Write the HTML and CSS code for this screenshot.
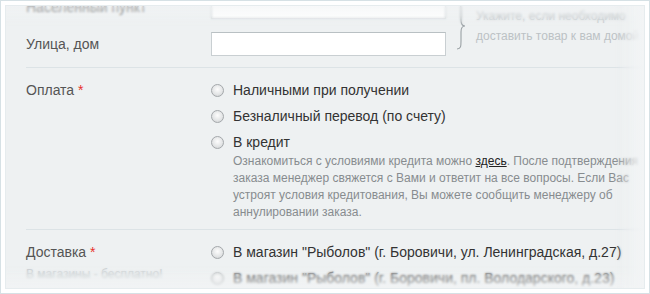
FILE: index.html
```html
<!DOCTYPE html>
<html lang="ru">
<head>
  <meta charset="UTF-8">
  <title>Оформление заказа</title>
  <link rel="stylesheet" href="styles.css">
</head>
<body>

  <div class="frame">
    <div class="shot">
      <form class="order">

        <div class="address">
          <label class="label">Населенный пункт</label>
          <input type="text" class="text-input">
          <div class="hint">
            <svg class="brace" width="10" height="48" viewBox="0 0 10 48">
              <path d="M1 1 C5 1 5 4 5 9 L5 18 C5 22 6 24 9 24 C6 24 5 26 5 30 L5 39 C5 44 5 47 1 47" fill="none" stroke="#9aa1a5" stroke-width="1.1"/>
            </svg>
            <p>Укажите, если необходимо<br>доставить товар к вам домой</p>
          </div>
          <label class="label">Улица, дом</label>
          <input type="text" class="text-input">
        </div>

        <div class="field">
          <div class="label">Оплата <span class="req">*</span></div>
          <div class="options">
            <label class="option"><input type="radio" name="pay"> Наличными при получении</label>
            <label class="option"><input type="radio" name="pay"> Безналичный перевод (по счету)</label>
            <label class="option"><input type="radio" name="pay"> В кредит</label>
            <p class="note">Ознакомиться с условиями кредита можно <a href="#">здесь</a>. После подтверждения заказа менеджер свяжется с Вами и ответит на все вопросы. Если Вас устроят условия кредитования, Вы можете сообщить менеджеру об аннулировании заказа.</p>
          </div>
        </div>

        <div class="field">
          <div class="label">Доставка <span class="req">*</span>
            <div class="sublabel">В магазины - бесплатно!</div>
          </div>
          <div class="options">
            <label class="option"><input type="radio" name="ship"> В магазин "Рыболов" (г. Боровичи, ул. Ленинградская, д.27)</label>
            <label class="option"><input type="radio" name="ship"> В магазин "Рыболов" (г. Боровичи, пл. Володарского, д.23)</label>
          </div>
        </div>

      </form>

      <!-- soft edges of the cropped screenshot -->
      <div class="fade fade-top"></div>
      <div class="fade fade-bottom"></div>
      <div class="fade fade-right"></div>
    </div>
  </div>

</body>
</html>
```

FILE: styles.css
```css
body {
  margin: 0;
  background: #fff;
  font-family: 'Liberation Sans', Arial, sans-serif;
}

.frame {
  width: 650px;
  height: 294px;
  box-sizing: border-box;
  border: 1px solid #d6e1e5;
  padding: 4px;
  background: #fff;
}

.shot {
  position: relative;
  height: 284px;
  overflow: hidden;
  background: #eef1f2;
  border: 1px solid #e6ecee;
  box-sizing: border-box;
}

.order {
  margin-top: -12px;
  padding-left: 20px;
}

.label {
  color: #555;
  font-size: 14px;
  line-height: 26px;
}

.req {
  color: #e8302a;
}

/* address block: two inputs with a hint to the right */
.address {
  display: grid;
  grid-template-columns: 185px 235px 1fr;
  row-gap: 11px;
  align-items: center;
  padding-bottom: 10px;
}

.text-input {
  height: 24px;
  box-sizing: border-box;
  border: 1px solid #c9cfd2;
  border-top-color: #b9c0c3;
  background: #fff;
  margin: 0;
}

.hint {
  grid-column: 3;
  grid-row: 1 / span 2;
  display: flex;
  align-items: center;
  gap: 10px;
  margin-left: 10px;
}

.hint p {
  margin: 0;
  font-size: 12px;
  line-height: 20px;
  color: #bcc2c5;
  white-space: nowrap;
}

.field {
  display: grid;
  grid-template-columns: 185px 1fr;
  border-top: 1px solid #dce3e6;
  padding: 9px 0 8px;
}

.sublabel {
  font-size: 12px;
  line-height: 14px;
  color: #c3c9cc;
  margin-top: 2px;
}

.option {
  display: flex;
  align-items: center;
  gap: 9px;
  height: 26px;
  font-size: 14px;
  color: #333;
  white-space: nowrap;
}

.option input {
  appearance: none;
  width: 13px;
  height: 13px;
  margin: 0;
  border: 1px solid #a4a8ab;
  border-radius: 50%;
  background: radial-gradient(circle at 50% 40%, #fdfdfd 0%, #e2e4e5 60%, #c9cccd 100%);
}

.note {
  margin: -2px 0 0 22px;
  width: 418px;
  font-size: 12px;
  line-height: 17px;
  color: #878c8f;
}

.note a {
  color: #222;
}

.fade {
  position: absolute;
  pointer-events: none;
  backdrop-filter: blur(1px);
}

.fade-top {
  left: 0;
  right: 0;
  top: 0;
  height: 20px;
  background: linear-gradient(rgba(242, 244, 245, 0.6), rgba(238, 241, 242, 0));
  -webkit-mask-image: linear-gradient(#000 50%, transparent);
}

.fade-bottom {
  left: 0;
  right: 0;
  bottom: 0;
  height: 22px;
  background: linear-gradient(rgba(238, 241, 242, 0), rgba(242, 244, 245, 0.75));
  -webkit-mask-image: linear-gradient(transparent, #000 45%);
}

.fade-right {
  top: 0;
  bottom: 0;
  right: 0;
  width: 30px;
  background: linear-gradient(to right, rgba(238, 241, 242, 0), #f2f4f5);
  -webkit-mask-image: linear-gradient(to right, transparent, #000 70%);
}
```
